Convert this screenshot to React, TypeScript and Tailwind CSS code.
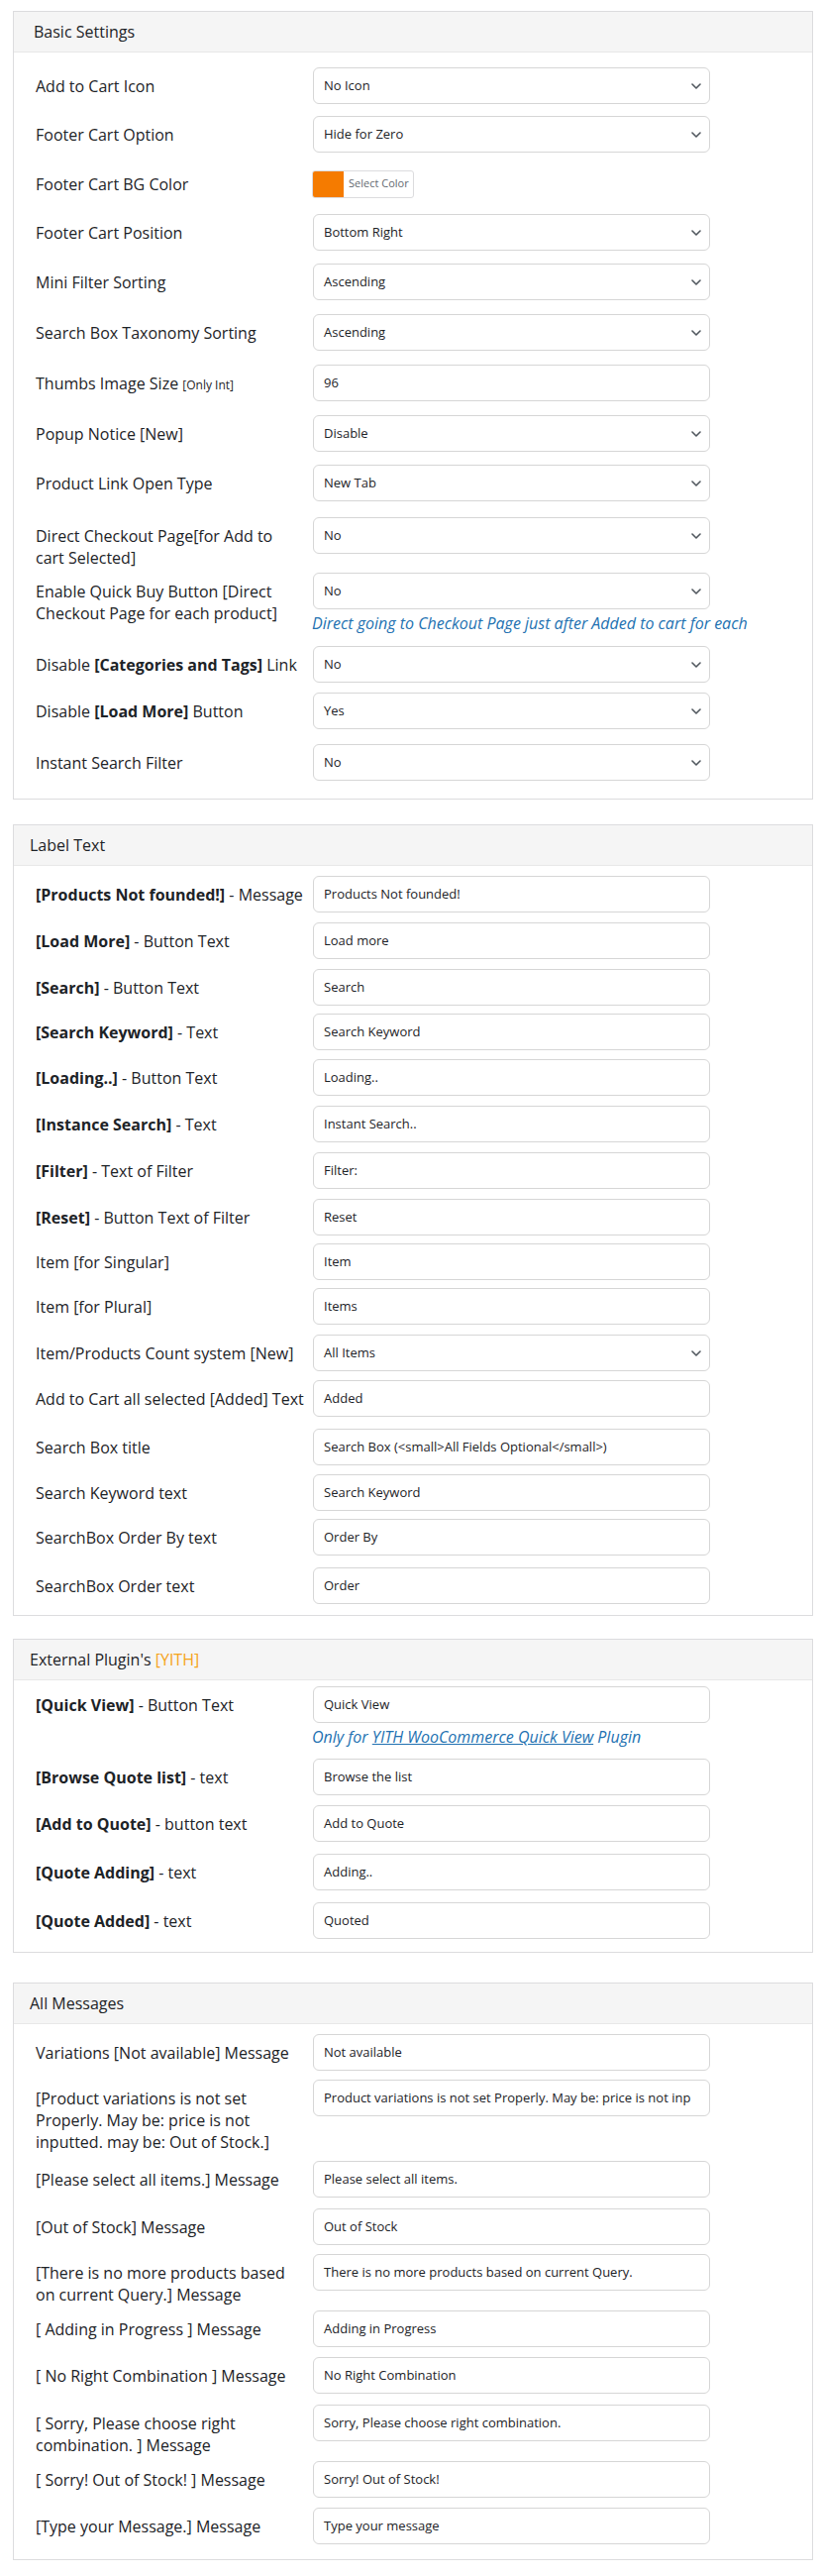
import React from "react";

const Chevron = () => (
  <svg width="10" height="6" viewBox="0 0 10 6" fill="none" className="shrink-0">
    <path d="M1 1l4 4 4-4" stroke="#50575e" strokeWidth="1.6" strokeLinecap="round" strokeLinejoin="round" />
  </svg>
);

const Select = ({ value }: { value: string }) => (
  <div className="flex h-[37px] w-[401px] items-center justify-between rounded-[6px] border border-[#d6d6d6] bg-white pl-[10px] pr-[8px] text-[13px] text-[#1d2327]">
    <span>{value}</span>
    <Chevron />
  </div>
);

const TextInput = ({ value }: { value: string }) => (
  <div className="flex h-[37px] w-[401px] items-center overflow-hidden whitespace-nowrap rounded-[6px] border border-[#d6d6d6] bg-white pl-[10px] pr-[10px] text-[13px] text-[#1d2327]">
    <span>{value}</span>
  </div>
);

const ColorPick = () => (
  <div className="flex h-[37px] items-center">
    <div className="-ml-px flex h-[28px] w-[103px] overflow-hidden rounded-[3px] border border-[#dcdcde] bg-white">
      <div className="h-full w-[31px] bg-[#f57b00]" />
      <div className="flex flex-1 items-center pl-[5px] text-[11px] text-[#646970]">Select Color</div>
    </div>
  </div>
);

const Help = ({ children }: { children: React.ReactNode }) => (
  <div className="-ml-px mt-[3px] whitespace-nowrap text-[16px] italic leading-[22px] text-[#2271b1]">{children}</div>
);

const Row = ({ label, h, children }: { label: React.ReactNode; h: string; children: React.ReactNode }) => (
  <div className={`flex ${h}`}>
    <div className="w-[280px] shrink-0 whitespace-nowrap pt-[8px] text-[16px] leading-[22px] text-[#1d2327]">{label}</div>
    <div className="flex flex-col">{children}</div>
  </div>
);

const Card = ({
  title,
  cls,
  titleCls,
  bodyCls,
  children,
}: {
  title: React.ReactNode;
  cls: string;
  titleCls: string;
  bodyCls: string;
  children: React.ReactNode;
}) => (
  <div className={`ml-[13px] w-[808px] border border-[#dcdcde] bg-white ${cls}`}>
    <div className={`flex h-[41px] items-center border-b border-[#e8e8e8] bg-[#f5f5f5] text-[16px] text-[#1d2327] ${titleCls}`}>{title}</div>
    <div className={`pl-[22px] ${bodyCls}`}>{children}</div>
  </div>
);

const B = ({ children }: { children: React.ReactNode }) => <span className="font-bold">{children}</span>;

export default function App() {
  return (
    <div className="min-h-[2600px] bg-white pt-[11px] text-[#1d2327]" style={{ fontFamily: '"Open Sans", "Noto Sans", sans-serif' }}>
      <Card title="Basic Settings" cls="" titleCls="pl-[20px]" bodyCls="pt-[15px] pb-[18px]">
        <Row label="Add to Cart Icon" h="h-[49px]"><Select value="No Icon" /></Row>
        <Row label="Footer Cart Option" h="h-[50px]"><Select value="Hide for Zero" /></Row>
        <Row label="Footer Cart BG Color" h="h-[49px]"><ColorPick /></Row>
        <Row label="Footer Cart Position" h="h-[50px]"><Select value="Bottom Right" /></Row>
        <Row label="Mini Filter Sorting" h="h-[51px]"><Select value="Ascending" /></Row>
        <Row label="Search Box Taxonomy Sorting" h="h-[51px]"><Select value="Ascending" /></Row>
        <Row label={<>Thumbs Image Size <span className="text-[12px]">[Only Int]</span></>} h="h-[51px]"><TextInput value="96" /></Row>
        <Row label="Popup Notice [New]" h="h-[50px]"><Select value="Disable" /></Row>
        <Row label="Product Link Open Type" h="h-[53px]"><Select value="New Tab" /></Row>
        <Row label={<>Direct Checkout Page[for Add to<br />cart Selected]</>} h="h-[56px]"><Select value="No" /></Row>
        <Row label={<>Enable Quick Buy Button [Direct<br />Checkout Page for each product]</>} h="h-[74px]">
          <Select value="No" />
          <Help>Direct going to Checkout Page just after Added to cart for each</Help>
        </Row>
        <Row label={<>Disable <B>[Categories and Tags]</B> Link</>} h="h-[47px]"><Select value="No" /></Row>
        <Row label={<>Disable <B>[Load More]</B> Button</>} h="h-[52px]"><Select value="Yes" /></Row>
        <Row label="Instant Search Filter" h="h-[37px]"><Select value="No" /></Row>
      </Card>

      <Card title="Label Text" cls="mt-[25px]" titleCls="pl-[16px]" bodyCls="pt-[10px] pb-[11px]">
        <Row label={<><B>[Products Not founded!]</B> - Message</>} h="h-[47px]"><TextInput value="Products Not founded!" /></Row>
        <Row label={<><B>[Load More]</B> - Button Text</>} h="h-[47px]"><TextInput value="Load more" /></Row>
        <Row label={<><B>[Search]</B> - Button Text</>} h="h-[45px]"><TextInput value="Search" /></Row>
        <Row label={<><B>[Search Keyword]</B> - Text</>} h="h-[46px]"><TextInput value="Search Keyword" /></Row>
        <Row label={<><B>[Loading..]</B> - Button Text</>} h="h-[47px]"><TextInput value="Loading.." /></Row>
        <Row label={<><B>[Instance Search]</B> - Text</>} h="h-[47px]"><TextInput value="Instant Search.." /></Row>
        <Row label={<><B>[Filter]</B> - Text of Filter</>} h="h-[47px]"><TextInput value="Filter:" /></Row>
        <Row label={<><B>[Reset]</B> - Button Text of Filter</>} h="h-[45px]"><TextInput value="Reset" /></Row>
        <Row label="Item [for Singular]" h="h-[45px]"><TextInput value="Item" /></Row>
        <Row label="Item [for Plural]" h="h-[47px]"><TextInput value="Items" /></Row>
        <Row label="Item/Products Count system [New]" h="h-[46px]"><Select value="All Items" /></Row>
        <Row label="Add to Cart all selected [Added] Text" h="h-[49px]"><TextInput value="Added" /></Row>
        <Row label="Search Box title" h="h-[46px]"><TextInput value="Search Box (<small>All Fields Optional</small>)" /></Row>
        <Row label="Search Keyword text" h="h-[45px]"><TextInput value="Search Keyword" /></Row>
        <Row label="SearchBox Order By text" h="h-[49px]"><TextInput value="Order By" /></Row>
        <Row label="SearchBox Order text" h="h-[37px]"><TextInput value="Order" /></Row>
      </Card>

      <Card
        title={<>External Plugin's&nbsp;<span className="text-[#f5a31a]">[YITH]</span></>}
        cls="mt-[23px]"
        titleCls="pl-[16px]"
        bodyCls="pt-[6px] pb-[13px]"
      >
        <Row label={<><B>[Quick View]</B> - Button Text</>} h="h-[73px]">
          <TextInput value="Quick View" />
          <Help>
            Only for <span className="underline">YITH WooCommerce Quick View</span> Plugin
          </Help>
        </Row>
        <Row label={<><B>[Browse Quote list]</B> - text</>} h="h-[47px]"><TextInput value="Browse the list" /></Row>
        <Row label={<><B>[Add to Quote]</B> - button text</>} h="h-[49px]"><TextInput value="Add to Quote" /></Row>
        <Row label={<><B>[Quote Adding]</B> - text</>} h="h-[49px]"><TextInput value="Adding.." /></Row>
        <Row label={<><B>[Quote Added]</B> - text</>} h="h-[37px]"><TextInput value="Quoted" /></Row>
      </Card>

      <Card title="All Messages" cls="mt-[30px]" titleCls="pl-[16px]" bodyCls="pt-[10px] pb-[15px]">
        <Row label="Variations [Not available] Message" h="h-[46px]"><TextInput value="Not available" /></Row>
        <Row label={<>[Product variations is not set<br />Properly. May be: price is not<br />inputted. may be: Out of Stock.]</>} h="h-[82px]">
          <TextInput value="Product variations is not set Properly. May be: price is not inp" />
        </Row>
        <Row label="[Please select all items.] Message" h="h-[48px]"><TextInput value="Please select all items." /></Row>
        <Row label="[Out of Stock] Message" h="h-[46px]"><TextInput value="Out of Stock" /></Row>
        <Row label={<>[There is no more products based<br />on current Query.] Message</>} h="h-[57px]"><TextInput value="There is no more products based on current Query." /></Row>
        <Row label="[ Adding in Progress ] Message" h="h-[47px]"><TextInput value="Adding in Progress" /></Row>
        <Row label="[ No Right Combination ] Message" h="h-[48px]"><TextInput value="No Right Combination" /></Row>
        <Row label={<>[ Sorry, Please choose right<br />combination. ] Message</>} h="h-[57px]"><TextInput value="Sorry, Please choose right combination." /></Row>
        <Row label="[ Sorry! Out of Stock! ] Message" h="h-[47px]"><TextInput value="Sorry! Out of Stock!" /></Row>
        <Row label="[Type your Message.] Message" h="h-[37px]"><TextInput value="Type your message" /></Row>
      </Card>
    </div>
  );
}
